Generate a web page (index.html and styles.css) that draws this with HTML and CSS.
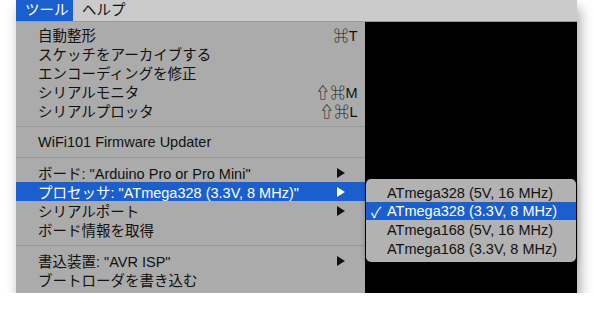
FILE: index.html
```html
<!DOCTYPE html>
<html lang="ja">
<head>
    <meta charset="UTF-8">
    <title>ツール メニュー</title>
    <link rel="stylesheet" href="styles.css">
</head>
<body>
    <div class="janela">
        <div class="barra">
            <span class="barra-item ativo">ツール</span>
            <span class="barra-item">ヘルプ</span>
        </div>
        <div class="corpo">
            <div class="menu">
                <div class="item"><span>自動整形</span><span class="atalho">⌘T</span></div>
                <div class="item"><span>スケッチをアーカイブする</span></div>
                <div class="item"><span>エンコーディングを修正</span></div>
                <div class="item"><span>シリアルモニタ</span><span class="atalho">⇧⌘M</span></div>
                <div class="item"><span>シリアルプロッタ</span><span class="atalho">⇧⌘L</span></div>
                <div class="sep"></div>
                <div class="item"><span>WiFi101 Firmware Updater</span></div>
                <div class="sep"></div>
                <div class="item"><span>ボード: "Arduino Pro or Pro Mini"</span><span class="seta"></span></div>
                <div class="item sel"><span>プロセッサ: "ATmega328 (3.3V, 8 MHz)"</span><span class="seta"></span></div>
                <div class="item"><span>シリアルポート</span><span class="seta"></span></div>
                <div class="item"><span>ボード情報を取得</span></div>
                <div class="sep"></div>
                <div class="item"><span>書込装置: "AVR ISP"</span><span class="seta"></span></div>
                <div class="item"><span>ブートローダを書き込む</span></div>
            </div>
            <div class="fundo"></div>
        </div>
        <div class="submenu">
            <div class="sub-item"><span class="check"></span>ATmega328 (5V, 16 MHz)</div>
            <div class="sub-item sel"><span class="check">✓</span>ATmega328 (3.3V, 8 MHz)</div>
            <div class="sub-item"><span class="check"></span>ATmega168 (5V, 16 MHz)</div>
            <div class="sub-item"><span class="check"></span>ATmega168 (3.3V, 8 MHz)</div>
        </div>
    </div>
</body>
</html>
```

FILE: styles.css
```css
body {
    margin: 0;
    background-color: #fff;
    font-family: "Liberation Sans", "Noto Sans CJK JP", sans-serif;
    font-size: 14.5px;
    color: #111;
}
.janela {
    position: relative;
    width: 561px;
    height: 293px;
    margin-left: 16px;
    box-shadow: 3px 8px 12px rgba(0, 0, 0, 0.35);
}
.barra {
    display: flex;
    height: 22px;
    background-color: #cbcbcb;
    border-bottom: 1px solid #9a9a9a;
    box-sizing: border-box;
}
.barra-item {
    padding: 0 9px;
    line-height: 21px;
    white-space: nowrap;
}
.barra-item.ativo {
    width: 57px;
    box-sizing: border-box;
    background-color: #1b5fcf;
    color: #fff;
}
.corpo {
    display: flex;
    height: 271px;
}
.menu {
    width: 349px;
    background-color: #ababab;
    padding: 3px 0 4px;
    box-sizing: border-box;
}
.fundo {
    flex: 1;
    background-color: #000;
}
.item {
    display: flex;
    justify-content: space-between;
    align-items: center;
    height: 19px;
    padding: 0 7px 0 22px;
    white-space: nowrap;
}
.item.sel {
    background-color: #1b5fcf;
    color: #fff;
}
.atalho {
    letter-spacing: 0.5px;
}
.seta {
    width: 0;
    height: 0;
    margin-right: 13px;
    border-top: 5px solid transparent;
    border-bottom: 5px solid transparent;
    border-left: 8px solid #111;
}
.item.sel .seta {
    border-left-color: #fff;
}
.sep {
    height: 1px;
    margin: 6px 0 5px;
    background-color: #989898;
}
.submenu {
    position: absolute;
    left: 350px;
    top: 179px;
    width: 210px;
    padding: 4px 0;
    background-color: #b2b2b2;
    border-radius: 5px;
    box-shadow: 0 2px 6px rgba(0, 0, 0, 0.3);
}
.sub-item {
    display: flex;
    align-items: center;
    height: 19px;
    padding-left: 5px;
    white-space: nowrap;
}
.sub-item.sel {
    height: 18px;
    background-color: #1b5fcf;
    color: #fff;
}
.check {
    width: 16px;
    font-size: 15px;
}
```
